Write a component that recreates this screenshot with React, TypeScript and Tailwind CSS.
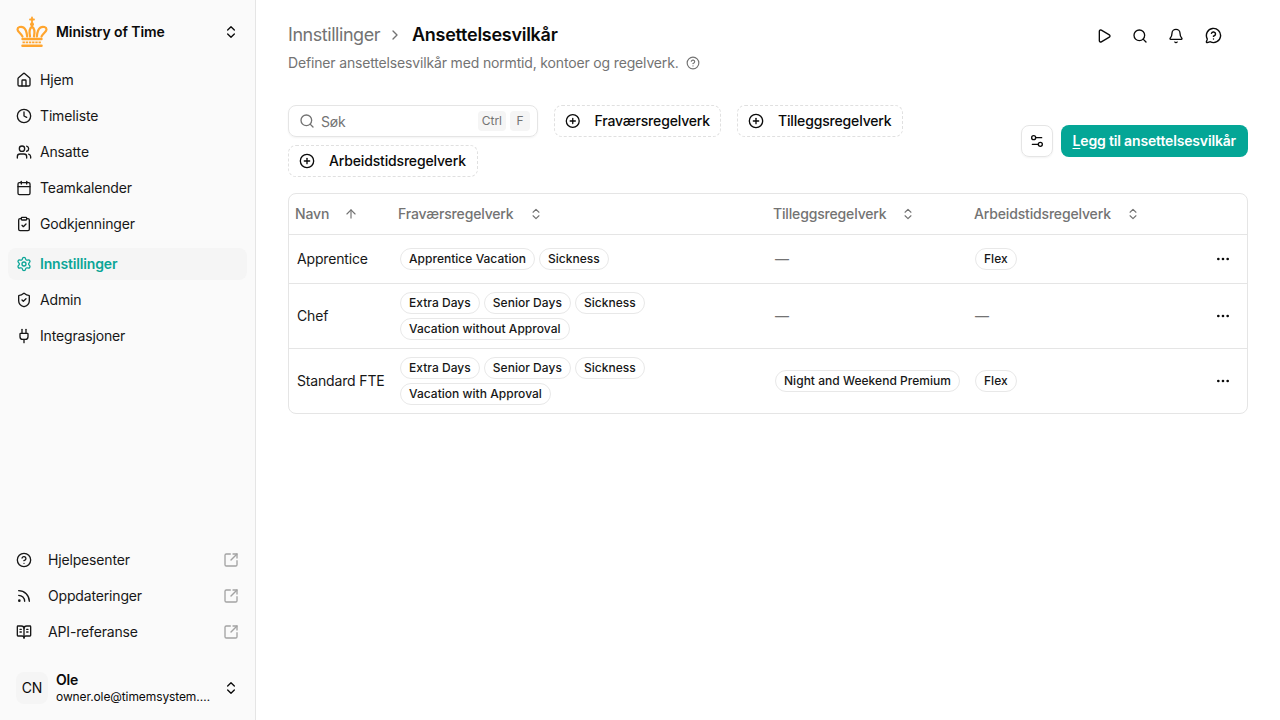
import {
  ArrowUp,
  Bell,
  BookOpenText,
  Calendar,
  ChevronRight,
  ChevronsUpDown,
  CircleHelp,
  CirclePlus,
  ClipboardCheck,
  Clock,
  Ellipsis,
  House,
  MessageCircleQuestion,
  Play,
  Plug,
  Rss,
  Search,
  Settings,
  Settings2,
  ShieldCheck,
  SquareArrowOutUpRight,
  Users,
} from "lucide-react"

const mainNav = [
  { title: "Hjem", icon: House },
  { title: "Timeliste", icon: Clock },
  { title: "Ansatte", icon: Users },
  { title: "Teamkalender", icon: Calendar },
  { title: "Godkjenninger", icon: ClipboardCheck },
]

const settingsNav = [
  { title: "Innstillinger", icon: Settings, active: true },
  { title: "Admin", icon: ShieldCheck },
  { title: "Integrasjoner", icon: Plug },
]

const footerNav = [
  { title: "Hjelpesenter", icon: CircleHelp },
  { title: "Oppdateringer", icon: Rss },
  { title: "API-referanse", icon: BookOpenText },
]

const rows = [
  {
    name: "Apprentice",
    absence: ["Apprentice Vacation", "Sickness"],
    extra: [],
    work: ["Flex"],
  },
  {
    name: "Chef",
    absence: ["Extra Days", "Senior Days", "Sickness", "Vacation without Approval"],
    extra: [],
    work: [],
  },
  {
    name: "Standard FTE",
    absence: ["Extra Days", "Senior Days", "Sickness", "Vacation with Approval"],
    extra: ["Night and Weekend Premium"],
    work: ["Flex"],
  },
]

function Crown() {
  return (
    <svg width="32" height="32" viewBox="0 0 32 32" fill="none" stroke="#ffa52e" strokeLinecap="round">
      <path d="M16 1.500v5M14 3.500h4" strokeWidth="1.800" />
      <circle cx="16" cy="8.300" r="2" fill="#ffa52e" stroke="none" />
      <path d="M6.500 20.500C5 17.500 1.500 15.800 1.500 13.500 1.500 11.200 5 10 7.500 11.500c2 1.200 3.200 3.800 3.600 9" strokeWidth="2.200" />
      <path d="M25.500 20.500c1.500-3 5-4.700 5-7 0-2.300-3.500-3.500-6-2-2 1.200-3.200 3.800-3.600 9" strokeWidth="2.200" />
      <path d="M14 20.500C13 15.500 13 12.500 16 10.800c3 1.700 3 4.700 2 9.700" strokeWidth="2.200" />
      <path d="M6.500 23h19" strokeWidth="2.400" />
      <path d="M6.500 26.300h19" strokeWidth="1.800" strokeDasharray="2.400 .8" strokeLinecap="butt" />
      <path d="M6.500 29.800h19" strokeWidth="2.500" />
    </svg>
  )
}

function Tag({ label }: { label: string }) {
  return (
    <span className="inline-flex h-[22px] items-center rounded-full border border-[#e8e8e8] bg-white px-2 text-xs font-medium tracking-[0.03px] whitespace-nowrap text-[#171717]">
      {label}
    </span>
  )
}

function TagCell({ tags }: { tags: string[] }) {
  if (tags.length === 0) return <span className="text-[#737373]">—</span>
  return (
    <div className="flex flex-wrap gap-1">
      {tags.map((tag) => (
        <Tag key={tag} label={tag} />
      ))}
    </div>
  )
}

function FilterButton({ label, className }: { label: string; className: string }) {
  return (
    <button
      className={`flex h-8 items-center gap-[14px] rounded-lg border border-dashed border-[#e0e0e0] px-[10px] text-sm font-medium whitespace-nowrap text-[#0a0a0a] ${className}`}
    >
      <CirclePlus className="h-4 w-4" />
      {label}
    </button>
  )
}

function HeadCell({ label, first, className }: { label: string; first?: boolean; className?: string }) {
  return (
    <th className={`h-10 p-0 text-left align-middle font-medium ${className ?? ""}`}>
      <span className="flex items-center gap-[15px] pl-[6px] text-sm text-[#737373]">
        {label}
        {first ? (
          <ArrowUp className="h-[14px] w-[14px]" />
        ) : (
          <ChevronsUpDown className="h-[14px] w-[14px]" />
        )}
      </span>
    </th>
  )
}

export default function App() {
  return (
    <div className="flex h-screen bg-white font-['Inter',sans-serif] tracking-[-0.16px] text-[#0a0a0a]">
      {/* Sidebar */}
      <aside className="flex w-[256px] shrink-0 flex-col border-r border-[#e5e5e5] bg-[#fafafa] px-2">
        <div className="mt-4 flex h-8 items-center gap-2 px-2">
          <Crown />
          <span className="flex-1 text-sm font-semibold tracking-[-0.1px]">Ministry of Time</span>
          <ChevronsUpDown className="h-4 w-4" />
        </div>

        <nav className="mt-4 flex flex-col gap-1">
          {mainNav.map((item) => (
            <a key={item.title} className="flex h-8 items-center gap-2 px-2 text-sm text-[#171717]">
              <item.icon className="h-4 w-4" />
              {item.title}
            </a>
          ))}
        </nav>

        <nav className="mt-2 flex flex-col gap-1">
          {settingsNav.map((item) => (
            <a
              key={item.title}
              className={`flex h-8 items-center gap-2 rounded-lg px-2 text-sm ${
                item.active ? "bg-[#f5f5f5] font-semibold text-[#0ba597]" : "text-[#171717]"
              }`}
            >
              <item.icon className="h-4 w-4" />
              {item.title}
            </a>
          ))}
        </nav>

        <nav className="mt-auto flex flex-col gap-1">
          {footerNav.map((item) => (
            <a key={item.title} className="flex h-8 items-center px-2 text-sm text-[#171717]">
              <item.icon className="h-4 w-4" />
              <span className="ml-4 flex-1">{item.title}</span>
              <SquareArrowOutUpRight className="h-4 w-4 text-[#a3a3a3]" />
            </a>
          ))}
        </nav>

        <div className="mt-6 mb-4 flex h-8 items-center gap-2 px-2">
          <span className="flex h-8 w-8 shrink-0 items-center justify-center rounded-lg bg-[#f5f5f5] text-sm">
            CN
          </span>
          <div className="min-w-0 flex-1">
            <p className="text-sm leading-[18px] font-semibold">Ole</p>
            <p className="truncate pr-1 text-xs leading-[16px] tracking-[-0.1px]">owner.ole@timemsystem.no</p>
          </div>
          <ChevronsUpDown className="h-4 w-4 shrink-0" />
        </div>
      </aside>

      {/* Main */}
      <main className="min-w-0 flex-1 px-8">
        <header className="flex items-start justify-between pt-6">
          <div>
            <div className="flex h-[22px] items-center text-lg tracking-tight">
              <span className="text-[#737373]">Innstillinger</span>
              <ChevronRight className="mx-[7px] h-4 w-4 text-[#737373]" />
              <span className="ml-[2px] font-semibold tracking-[-0.27px] text-[#0a0a0a]">Ansettelsesvilkår</span>
            </div>
            <div className="mt-[7px] flex h-5 items-center gap-[7px] text-sm text-[#737373]">
              Definer ansettelsesvilkår med normtid, kontoer og regelverk.
              <CircleHelp className="h-[14px] w-[14px]" />
            </div>
          </div>
          <div className="mt-[3px] mr-[26px] flex items-center gap-5">
            <Play className="h-4 w-4" />
            <Search className="h-4 w-4" />
            <Bell className="h-4 w-4" />
            <MessageCircleQuestion className="ml-px h-[17px] w-[17px]" />
          </div>
        </header>

        <div className="mt-8 flex items-center justify-between">
          <div className="flex w-[700px] flex-wrap gap-x-4 gap-y-2">
            <div className="flex h-8 w-[250px] items-center rounded-lg border border-[#e5e5e5] pr-[7px] pl-[10px] shadow-xs">
              <Search className="h-4 w-4 text-[#737373]" />
              <span className="mt-px ml-[6px] flex-1 text-sm text-[#737373]">Søk</span>
              <span className="flex h-5 items-center rounded bg-[#f5f5f5] px-[4px] text-xs tracking-normal text-[#737373]">Ctrl</span>
              <span className="ml-1 flex h-5 w-5 items-center justify-center rounded bg-[#f5f5f5] text-xs text-[#737373]">F</span>
            </div>
            <FilterButton label="Fraværsregelverk" className="w-[167px]" />
            <FilterButton label="Tilleggsregelverk" className="w-[166px]" />
            <FilterButton label="Arbeidstidsregelverk" className="w-[190px]" />
          </div>
          <div className="flex items-center gap-2">
            <button className="flex h-8 w-8 items-center justify-center rounded-lg border border-[#e5e5e5] shadow-xs">
              <Settings2 className="h-4 w-4" />
            </button>
            <button className="h-8 rounded-lg bg-[#04a696] px-3 text-sm font-semibold text-white">
              <span className="underline underline-offset-2">L</span>egg til ansettelsesvilkår
            </button>
          </div>
        </div>

        <div className="mt-4 overflow-hidden rounded-lg border border-[#e5e5e5]">
          <table className="w-full table-fixed border-collapse text-sm">
            <thead>
              <tr className="border-b border-[#e5e5e5]">
                <HeadCell label="Navn" first className="w-[103px]" />
                <HeadCell label="Fraværsregelverk" className="w-[375px]" />
                <HeadCell label="Tilleggsregelverk" className="w-[201px]" />
                <HeadCell label="Arbeidstidsregelverk" />
                <th className="w-[48px]" />
              </tr>
            </thead>
            <tbody>
              {rows.map((row, index) => (
                <tr key={row.name} className={index < rows.length - 1 ? "border-b border-[#e5e5e5]" : ""}>
                  <td className="h-[49px] p-2 whitespace-nowrap text-[#171717]">{row.name}</td>
                  <td className="h-[49px] p-2">
                    <div className={row.absence.length > 2 ? "w-[260px]" : ""}>
                      <TagCell tags={row.absence} />
                    </div>
                  </td>
                  <td className="h-[49px] p-2">
                    <TagCell tags={row.extra} />
                  </td>
                  <td className="h-[49px] py-2 pr-2 pl-[7px]">
                    <TagCell tags={row.work} />
                  </td>
                  <td className="h-[49px] p-2 text-center">
                    <Ellipsis className="mx-auto h-4 w-4" />
                  </td>
                </tr>
              ))}
            </tbody>
          </table>
        </div>
      </main>
    </div>
  )
}
